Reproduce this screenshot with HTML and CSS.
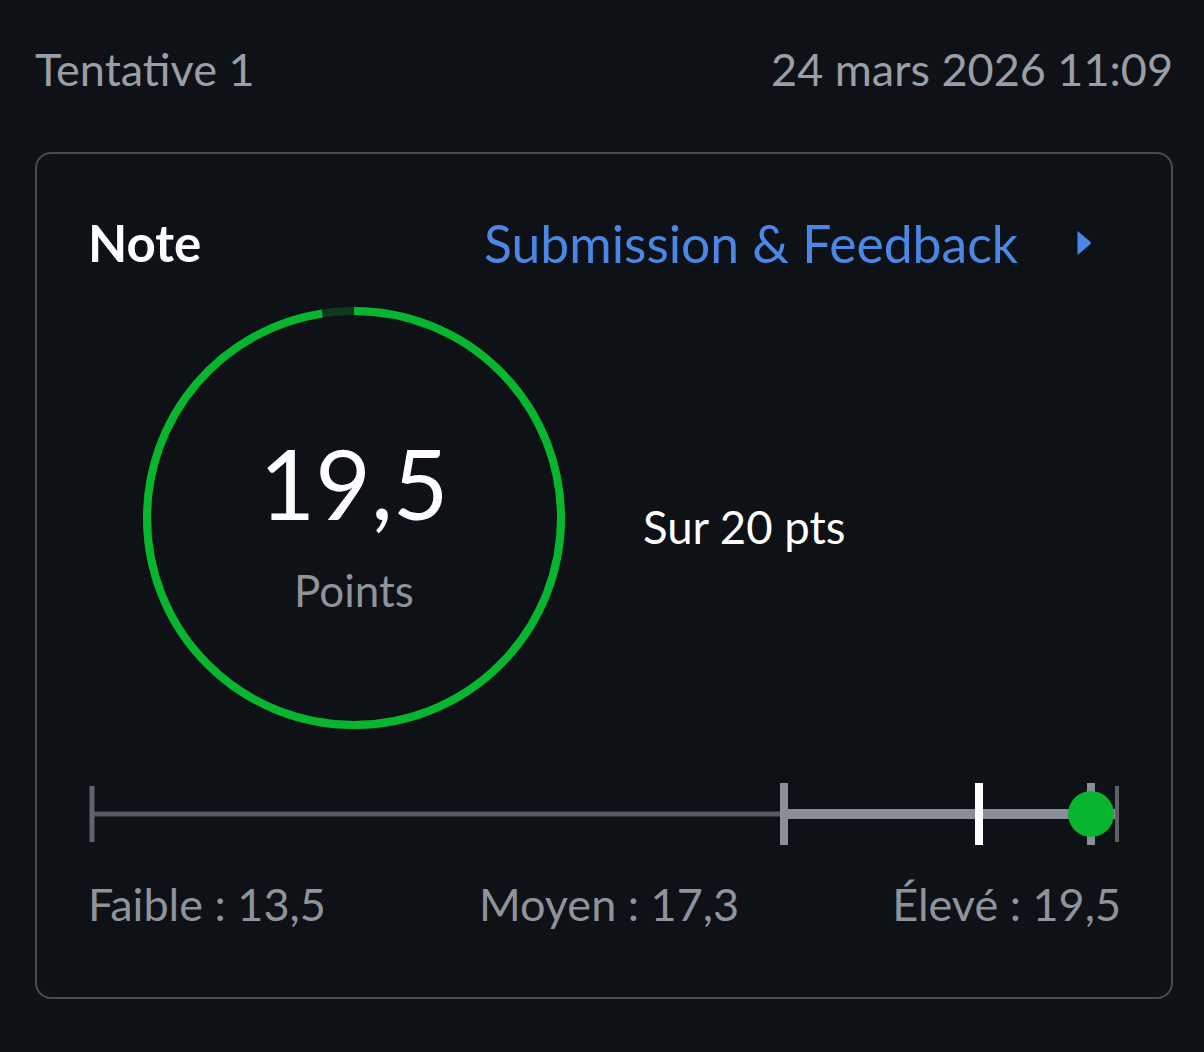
FILE: index.html
```html
<!DOCTYPE html>
<html lang="fr">
<head>
<meta charset="utf-8">
<title>Tentative 1</title>
<link rel="stylesheet" href="styles.css">
</head>
<body>
<div class="page">
  <header class="attempt">
    <span class="attempt-title">Tentative 1</span>
    <span class="attempt-date">24 mars 2026 11:09</span>
  </header>

  <section class="card">
    <div class="card-head">
      <h2 class="card-title">Note</h2>
      <a class="card-link" href="#">
        <span>Submission &amp; Feedback</span>
        <svg class="caret" width="16" height="26" viewBox="0 0 16 26" aria-hidden="true"><path d="M1.5 1.5 Q1 0.6 2.2 1.4 L14.6 12 Q15.4 13 14.6 14 L2.2 24.6 Q1 25.4 1.5 24.5 Z" fill="#4a87e6"/></svg>
      </a>
    </div>

    <div class="score-row">
      <div class="ring">
        <svg class="ring-svg" width="422" height="422" viewBox="0 0 422 422" aria-hidden="true">
          <circle cx="211" cy="211" r="207" fill="none" stroke="#0c3a1b" stroke-width="8"/>
          <circle cx="211" cy="211" r="207" fill="none" stroke="#08b52f" stroke-width="8"
                  stroke-dasharray="1268.1 1300" transform="rotate(-90 211 211)"/>
        </svg>
        <div class="ring-text">
          <span class="score">19,5</span>
          <span class="score-unit">Points</span>
        </div>
      </div>
      <p class="score-total">Sur 20 pts</p>
    </div>

    <div class="range">
      <div class="range-track">
        <span class="bar bar-thin" style="left:0%;width:67.5%"></span>
        <span class="bar bar-thick" style="left:67.5%;width:32.5%"></span>
        <span class="tick tick-start" style="left:0%"></span>
        <span class="tick tick-low" style="left:67.5%"></span>
        <span class="tick tick-mean" style="left:86.5%"></span>
        <span class="tick tick-low" style="left:97.5%"></span>
        <span class="tick tick-end" style="left:100%"></span>
        <span class="dot" style="left:97.5%"></span>
      </div>
      <div class="range-labels">
        <span>Faible : 13,5</span>
        <span>Moyen : 17,3</span>
        <span>Élevé : 19,5</span>
      </div>
    </div>
  </section>
</div>
</body>
</html>
```

FILE: styles.css
```css
* { box-sizing: border-box; }

html, body {
  margin: 0;
  padding: 0;
  background: #0e1116;
}

body {
  font-family: Lato, "Open Sans", "Liberation Sans", sans-serif;
  color: #ffffff;
  width: 1204px;
  height: 1052px;
  overflow: hidden;
}

.page {
  padding: 42px 31px 0 35px;
}

.attempt {
  display: flex;
  justify-content: space-between;
  align-items: center;
  font-size: 45px;
  line-height: 54px;
  color: #9a9ea5;
}

.card {
  margin-top: 56px;
  border: 2px solid #494d53;
  border-radius: 16px;
  padding: 58px 50px 66px 51px;
}

.card-head {
  display: flex;
  justify-content: space-between;
  align-items: center;
}

.card-title {
  margin: 0;
  font-size: 51px;
  line-height: 62px;
  font-weight: 700;
  color: #ffffff;
}

.card-link {
  display: flex;
  align-items: center;
  gap: 58px;
  padding-right: 29px;
  font-size: 51.6px;
  line-height: 62px;
  color: #4a87e6;
  text-decoration: none;
}

.caret { display: block; }

.score-row {
  display: flex;
  align-items: center;
  margin-top: 33px;
  padding-left: 55px;
}

.ring {
  position: relative;
  width: 422px;
  height: 422px;
  flex: none;
}

.ring-svg {
  position: absolute;
  left: 0;
  top: 0;
}

.ring-text {
  position: relative;
  height: 100%;
  display: flex;
  flex-direction: column;
  align-items: center;
  justify-content: center;
  padding-top: 16px;
}

.score {
  font-size: 96px;
  line-height: 96px;
  color: #ffffff;
}

.score-unit {
  margin-top: 33px;
  font-size: 44px;
  line-height: 53px;
  color: #8f949b;
}

.score-total {
  margin: 18px 0 0 78px;
  font-size: 45.5px;
  line-height: 54px;
  color: #ffffff;
}

.range {
  margin-top: 54px;
}

.range-track {
  position: relative;
  height: 62px;
  margin: 0 4px 0 4px;
}

.bar {
  position: absolute;
  top: 50%;
  transform: translateY(-50%);
}

.bar-thin {
  height: 5px;
  background: #565b62;
}

.bar-thick {
  height: 10px;
  background: #8a8f96;
}

.tick {
  position: absolute;
  top: 50%;
  transform: translate(-50%, -50%);
  width: 8px;
  height: 62px;
}

.tick-start {
  width: 5px;
  height: 56px;
  background: #60656c;
}

.tick-low {
  background: #8a8f96;
}

.tick-mean {
  background: #ffffff;
}

.tick-end {
  width: 4px;
  height: 56px;
  background: #5c6168;
}

.dot {
  position: absolute;
  top: 50%;
  transform: translate(-50%, -50%);
  width: 46px;
  height: 46px;
  border-radius: 50%;
  background: #08b52f;
}

.range-labels {
  display: flex;
  justify-content: space-between;
  margin-top: 32px;
  font-size: 45px;
  line-height: 54px;
  color: #8f949b;
}
```
